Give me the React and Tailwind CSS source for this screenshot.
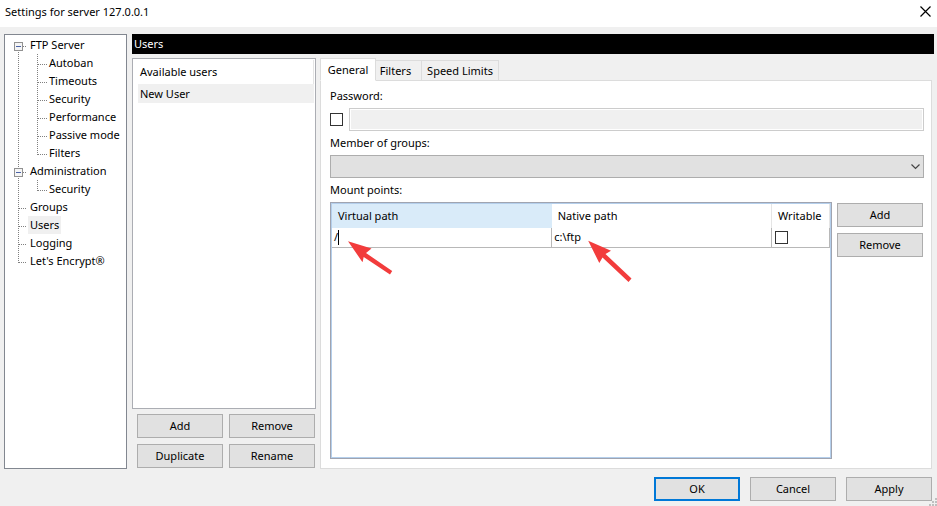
import clsx from "clsx";

const treeItems = [
  { label: "FTP Server", level: 1, expandable: true, first: true },
  { label: "Autoban", level: 2 },
  { label: "Timeouts", level: 2 },
  { label: "Security", level: 2 },
  { label: "Performance", level: 2 },
  { label: "Passive mode", level: 2 },
  { label: "Filters", level: 2, lastChild: true },
  { label: "Administration", level: 1, expandable: true },
  { label: "Security", level: 2, lastChild: true },
  { label: "Groups", level: 1 },
  { label: "Users", level: 1, selected: true },
  { label: "Logging", level: 1 },
  { label: "Let's Encrypt®", level: 1, last: true },
];

const tabs = [
  { label: "General", active: true, width: "w-14" },
  { label: "Filters", width: "w-[46px] pr-1.5" },
  { label: "Speed Limits", width: "w-[77px]" },
];

function Button({ children, primary = false, className }) {
  return (
    <button
      type="button"
      className={clsx(
        "h-6 bg-[#e1e1e1] text-center leading-5",
        primary ? "border-2 border-[#0078d7]" : "border border-[#adadad] hover:border-[#0078d7]",
        className
      )}
    >
      {children}
    </button>
  );
}

function Checkbox(props) {
  return (
    <input
      type="checkbox"
      className="block size-[13px] shrink-0 appearance-none border border-[#333] bg-white checked:bg-[#0078d7]"
      {...props}
    />
  );
}

// Dotted guide lines and the collapse box in front of a tree label
function TreeGutter({ item }) {
  const width = item.level === 1 ? 23 : 42;
  return (
    <svg
      width={width}
      height="18"
      className="shrink-0"
      stroke="#808080"
      strokeDasharray="1 1"
      shapeRendering="crispEdges"
      fill="none"
    >
      <path d={clsx("M13.5", item.first ? "10" : "0", "V", item.last ? "11" : "18")} />
      {item.level === 2 && <path d={item.lastChild ? "M32.5 0V11" : "M32.5 0V18"} />}
      <path d={item.level === 2 ? "M33 10.5H42" : "M14 10.5H22"} />
      {item.expandable && (
        <g strokeDasharray="none">
          <rect x="9.5" y="6.5" width="8" height="8" fill="#f5f5f5" stroke="#919191" />
          <path d="M11 10.5H16" stroke="#4b63a7" />
        </g>
      )}
    </svg>
  );
}

function SettingsTree() {
  return (
    <nav className="w-[123px] shrink-0 border border-[#828790] bg-white py-px">
      <ul>
        {treeItems.map((item, i) => (
          <li key={i} className="flex h-[18px] whitespace-nowrap">
            <TreeGutter item={item} />
            <a
              href="#"
              className={clsx("px-0.5 leading-[18px]", item.selected && "bg-[#f0f0f0]")}
            >
              {item.label}
            </a>
          </li>
        ))}
      </ul>
    </nav>
  );
}

function UserList() {
  return (
    <section className="flex w-[184px] shrink-0 flex-col">
      <div className="flex-1 border border-[#abadb3] bg-white p-px">
        <h2 className="h-6 border-r border-[#e5e5e5] px-1.5 leading-6">Available users</h2>
        <ul className="pl-1">
          <li className="h-[19px] bg-[#f0f0f0] px-0.5 leading-[19px]">New User</li>
        </ul>
      </div>
      <div className="grid grid-cols-2 gap-1.5 pt-[5px] pr-px pb-px pl-[5px]">
        <Button>Add</Button>
        <Button>Remove</Button>
        <Button>Duplicate</Button>
        <Button>Rename</Button>
      </div>
    </section>
  );
}

function Arrow({ className, d }) {
  return (
    <svg width="48" height="46" className={clsx("pointer-events-none absolute", className)} fill="#f23c3c">
      <path d={d} />
    </svg>
  );
}

function MountPoints() {
  return (
    <div className="relative flex-1 border border-[#a0a4b0] bg-white">
      <div className="h-full border border-[#b4cfec]">
        <table className="w-full table-fixed border-collapse text-left">
          <colgroup>
            <col />
            <col />
            <col className="w-[58px]" />
          </colgroup>
          <thead>
            <tr className="h-6">
              <th className="bg-[#d9ebf9] px-1.5 font-normal">Virtual path</th>
              <th className="border-r border-[#e5e5e5] px-1.5 font-normal">Native path</th>
              <th className="border-r border-[#e5e5e5] px-1.5 font-normal">Writable</th>
            </tr>
          </thead>
          <tbody>
            <tr className="h-[19px] border-b border-[#b8b8b8]">
              <td className="border-r border-[#b8b8b8] p-0 pl-0.5">
                <div className="flex items-center">
                  <span>/</span>
                  <span className="h-[15px] w-px bg-black" />
                </div>
              </td>
              <td className="border-r border-[#b8b8b8] p-0 pl-0.5">c:\ftp</td>
              <td className="border-r border-[#b8b8b8] p-0 pl-[3px]">
                <Checkbox aria-label="Writable" />
              </td>
            </tr>
          </tbody>
        </table>
      </div>
      <Arrow
        className="top-[37px] left-[16px]"
        d="M1 1.2L24.5 8.5L19 13L45.2 31L43 34.5L16.7 17L15.5 22.2Z"
      />
      <Arrow
        className="top-[36px] left-[256px]"
        d="M1.2 1.7L24 11.8L18.5 15L44.5 39.5L41.5 43L15.5 18.5L12.3 24Z"
      />
    </div>
  );
}

function GeneralTab() {
  return (
    <div className="flex flex-1 flex-col border border-[#dcdcdc] bg-white pt-1.5 pr-[7px] pb-[9px] pl-[9px]">
      <label htmlFor="password" className="h-[21px] leading-[18px]">Password:</label>
      <div className="flex items-center gap-1.5">
        <Checkbox aria-label="Set password" />
        <input
          id="password"
          type="password"
          disabled
          className="h-[23px] min-w-0 flex-1 border border-[#ccc] bg-[#f0f0f0] shadow-[inset_0_0_0_1px_#fff]"
        />
      </div>
      <label htmlFor="groups" className="mt-[3px] h-[21px] leading-[18px]">Member of groups:</label>
      <div className="relative">
        <select id="groups" className="block h-[23px] w-full appearance-none border border-[#adadad] bg-[#e1e1e1] px-1">
          <option value=""></option>
        </select>
        <svg width="9" height="6" className="pointer-events-none absolute top-[9px] right-1" fill="none" stroke="#444" strokeWidth="1.2">
          <path d="M0.5 0.5L4.5 4.5L8.5 0.5" />
        </svg>
      </div>
      <h3 className="mt-[3px] h-[21px] leading-[18px]">Mount points:</h3>
      <div className="flex flex-1 gap-[5px]">
        <MountPoints />
        <div className="mr-px flex w-[86px] flex-col gap-1.5 pt-px">
          <Button>Add</Button>
          <Button>Remove</Button>
        </div>
      </div>
    </div>
  );
}

function UserSettings() {
  return (
    <section className="mr-0.5 flex min-w-0 flex-1 flex-col">
      <div role="tablist" className="-mb-px flex items-end">
        {tabs.map((tab) => (
          <button
            key={tab.label}
            type="button"
            role="tab"
            aria-selected={!!tab.active}
            className={clsx(
              "border border-[#dcdcdc] leading-5",
              tab.active ? "z-10 h-[23px] border-b-white bg-white" : "h-[21px] border-l-0 bg-[#f0f0f0]",
              tab.width
            )}
          >
            {tab.label}
          </button>
        ))}
      </div>
      <GeneralTab />
    </section>
  );
}

export default function App() {
  return (
    <div className="flex min-h-screen flex-col bg-[#f0f0f0] font-['Noto_Sans',sans-serif] text-[11px] leading-4 text-black">
      <header className="flex h-[27px] items-center justify-between bg-white pr-[6px] pb-1 pl-[5px]">
        <h1>Settings for server 127.0.0.1</h1>
        <button type="button" aria-label="Close">
          <svg width="11" height="11" stroke="#000" strokeWidth="1.2" fill="none">
            <path d="M0.5 0.5L10.5 10.5M10.5 0.5L0.5 10.5" />
          </svg>
        </button>
      </header>

      <main className="flex flex-1 gap-[5px] pt-[7px] pr-[3px] pl-1">
        <SettingsTree />
        <div className="flex min-w-0 flex-1 flex-col gap-1">
          <h2 className="h-5 bg-black px-0.5 leading-5 text-white">Users</h2>
          <div className="flex flex-1 gap-1">
            <UserList />
            <UserSettings />
          </div>
        </div>
      </main>

      <footer className="relative flex justify-end gap-2.5 pt-2 pr-[5px] pb-[5px]">
        <Button primary className="w-[86px]">OK</Button>
        <Button className="w-[86px]">Cancel</Button>
        <Button className="w-[86px]">Apply</Button>
        <svg width="8" height="8" className="absolute right-0 bottom-0" fill="#bfbfbf" shapeRendering="crispEdges">
          <path d="M6 0h2v2h-2zM3 3h2v2h-2zM6 3h2v2h-2zM0 6h2v2h-2zM3 6h2v2h-2zM6 6h2v2h-2z" />
        </svg>
      </footer>
    </div>
  );
}
